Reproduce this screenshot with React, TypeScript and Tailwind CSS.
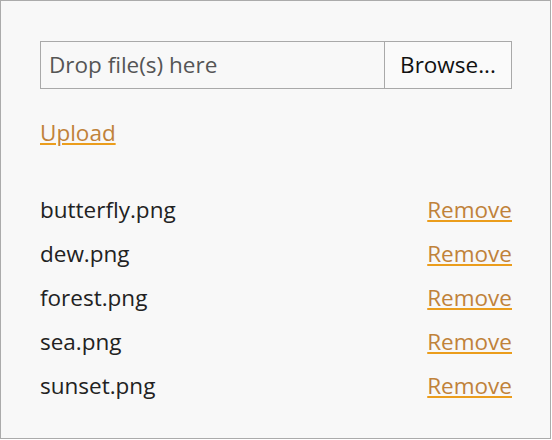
const files = ["butterfly.png", "dew.png", "forest.png", "sea.png", "sunset.png"];

export default function App() {
  return (
    <div
      className="w-[551px] h-[439px] border border-[#ababab] bg-[#f8f8f8] px-[39px] pt-[40px] text-[22.5px]"
      style={{ fontFamily: '"Open Sans", "Noto Sans", sans-serif' }}
    >
      <div className="flex h-[48px] w-[472px] border border-[#a9a9a9]">
        <div className="flex flex-1 items-center pl-[8px] text-[#555]">Drop file(s) here</div>
        <button className="w-[127px] border-l border-[#a9a9a9] bg-[#fafafa] text-[#111]">Browse...</button>
      </div>
      <div className="mt-[22px] leading-[44px]">
        <a className="text-[#c0823a] underline decoration-[#eb9d1c] decoration-2 underline-offset-[2px]">Upload</a>
      </div>
      <ul className="mt-[33px] w-[472px]">
        {files.map((f) => (
          <li key={f} className="flex h-[44px] items-center justify-between">
            <span className="text-[#222]">{f}</span>
            <a className="text-[#c0823a] underline decoration-[#eb9d1c] decoration-2 underline-offset-[2px]">Remove</a>
          </li>
        ))}
      </ul>
    </div>
  );
}
